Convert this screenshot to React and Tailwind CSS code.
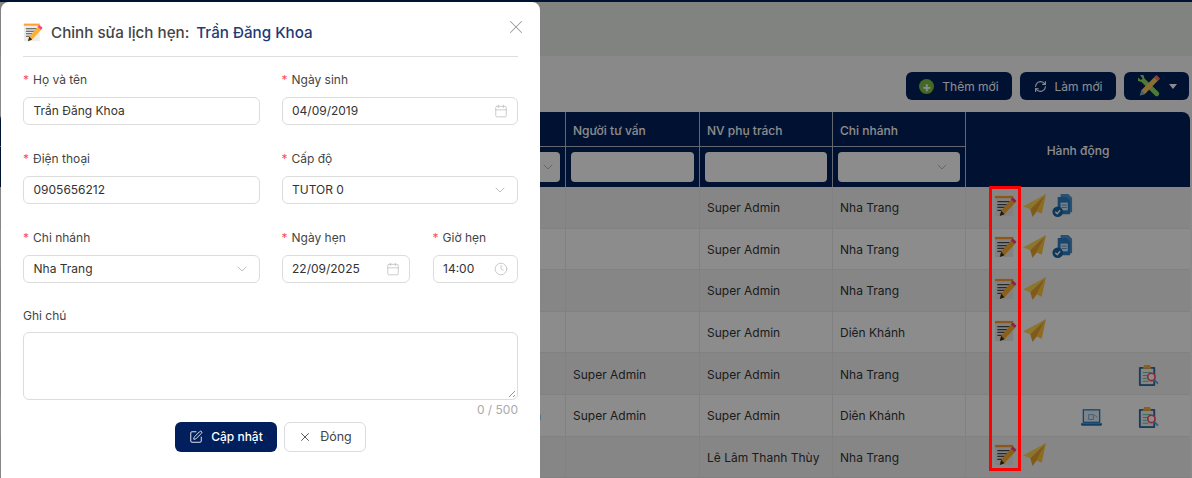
import React from "react";
import { ChevronDown, RefreshCw, X, Calendar, Clock, SquarePen } from "lucide-react";

const rows = [
  { advisor: "", staff: "Super Admin", branch: "Nha Trang", actions: ["edit", "plane", "doc"] },
  { advisor: "", staff: "Super Admin", branch: "Nha Trang", actions: ["edit", "plane", "doc"] },
  { advisor: "", staff: "Super Admin", branch: "Nha Trang", actions: ["edit", "plane"] },
  { advisor: "", staff: "Super Admin", branch: "Diên Khánh", actions: ["edit", "plane"] },
  { advisor: "Super Admin", staff: "Super Admin", branch: "Nha Trang", actions: [null, null, null, null, null, "clip"] },
  { advisor: "Super Admin", staff: "Super Admin", branch: "Diên Khánh", actions: [null, null, null, "laptop", null, "clip"], cut: "n" },
  { advisor: "", staff: "Lê Lâm Thanh Thùy", branch: "Nha Trang", actions: ["edit", "plane"] },
];

const EditIcon = ({ className }) => (
  <svg viewBox="0 0 24 24" className={className}>
    <rect x="1" y="2" width="19" height="21" fill="#ececec" />
    <rect x="1" y="2" width="19" height="2.400" fill="#ff9f2e" />
    <path d="M3.500 8h13M3.500 11h11M3.500 14h8M3.500 17h6" stroke="#4a4a4a" strokeWidth="1.300" />
    <path d="M19 4.500l4 3.500L11 21l-5 2 1.500-5.500z" fill="#ffb02e" />
    <path d="M19.500 3.500l4 3.500-2 2.200-4-3.500z" fill="#ff3f7f" />
    <path d="M7.500 17.500L6 23l5-2z" fill="#2e2e2e" />
  </svg>
);

const PlaneIcon = ({ className }) => (
  <svg viewBox="0 0 24 24" className={className}>
    <path d="M24 0L0 13l7.500 3z" fill="#ffd652" />
    <path d="M24 0L7.500 16 10 24l4.500-6z" fill="#e9a52f" />
    <path d="M24 0L14 18l5.500 2.500z" fill="#ffc53a" />
  </svg>
);

const DocIcon = ({ className }) => (
  <svg viewBox="0 0 24 24" className={className}>
    <path d="M10 0h8l4 4v15H10z" fill="#4a94d4" />
    <path d="M7 3h9l4 4v14H7z" fill="#2f7fc4" />
    <rect x="10" y="9" width="7.500" height="8" fill="#dcecf8" />
    <path d="M11 11.500h5.500M11 14h5.500" stroke="#4a94d4" strokeWidth="1" />
    <circle cx="7" cy="18.500" r="5.500" fill="#1a65a3" />
    <path d="M4.500 18.500l2 2 3-3.500" stroke="#fff" strokeWidth="1.400" fill="none" />
  </svg>
);

const ClipIcon = ({ className }) => (
  <svg viewBox="0 0 24 24" className={className}>
    <rect x="2" y="3" width="17" height="20" rx="1" fill="#2f6ea5" />
    <rect x="4" y="5" width="13" height="16" fill="#f2f2f2" />
    <path d="M7.500 1h6l1.500 4H6z" fill="#ffae35" />
    <path d="M6 9h9M6 12h5M6 15h4M6 18h6" stroke="#5cc29b" strokeWidth="1" />
    <circle cx="15" cy="13.500" r="3.800" fill="#fff" stroke="#ff4a6b" strokeWidth="1.700" />
    <path d="M18 16.500l4 4" stroke="#5aa5e6" strokeWidth="1.800" />
  </svg>
);

const LaptopIcon = ({ className }) => (
  <svg viewBox="0 0 24 24" className={className}>
    <rect x="3.500" y="4" width="17" height="13" fill="#e4f0fa" stroke="#2a80c4" strokeWidth="1.400" />
    <path d="M9 14V9h5v5zM15 9l3 3" stroke="#7aa8d0" strokeWidth="1" fill="none" />
    <path d="M1 18h22v1.500l-1 1H2l-1-1z" fill="#1f74b8" />
  </svg>
);

const ToolsIcon = ({ className }) => (
  <svg viewBox="0 0 24 24" className={className}>
    <path d="M3 1l3.500 0 1 3.500L21.500 18a2.400 2.400 0 01-3.500 3.500L4.500 8 1 7V3.500l3 2.500 1.500-1.500z" fill="#8fdc63" />
    <path d="M19 1.500l3.500 3.500L8 20l-5 1.500L4.500 16z" fill="#ffc85a" />
    <path d="M19.500 1l3.500 3.500-2.500 2.500L17 3.500z" fill="#ff7060" />
    <path d="M4.500 16L8 20l-5 1.500z" fill="#63b8e8" />
  </svg>
);

const icons = { edit: EditIcon, plane: PlaneIcon, doc: DocIcon, clip: ClipIcon, laptop: LaptopIcon };

const Label = ({ children, required = true }) => (
  <div className="h-[18px] leading-[18px] pt-[1px] text-[12px] text-[#444] mb-[9px]">
    {required && <span className="text-[#ff4d4f] mr-1">*</span>}
    {children}
  </div>
);

const Field = ({ children }) => (
  <div className="h-7 border border-[#dcdcdc] rounded-md bg-white flex items-center justify-between pl-[9.500px] pr-[9px] text-[12px] text-[#333]">
    <span className="contents">{children}</span>
  </div>
);

const HeadCell = ({ title, select = false }) => (
  <div className="border-r border-white/70 flex flex-col">
    <div className="h-[35px] border-b border-white/70 flex items-center pl-[7px] pt-[3px]">{title}</div>
    <div className="flex-1 flex items-center px-[5px]">
      <div className="w-full h-[30px] bg-white rounded flex items-center justify-end pr-[10px]">
        {select && <ChevronDown size={16} strokeWidth={1.2} className="text-[#aaa]" />}
      </div>
    </div>
  </div>
);

const App = () => {
  return (
    <div className="relative w-[1192px] h-[478px] overflow-hidden bg-[#fafafa]" style={{ fontFamily: "Inter, 'Noto Sans', sans-serif" }}>
      {/* page behind the modal */}
      <div className="h-[2px] bg-[#001f5c]" />
      <div className="h-[54px] bg-[#eceeec]" />
      <div className="flex justify-end gap-2 pr-[3px] pt-[16px] h-[56px]">
        <button className="w-[106px] h-7 rounded-md bg-[#001f5c] flex items-center justify-center gap-2 pt-[1px] text-[12px] text-white">
          <span className="w-[15px] h-[15px] rounded-full bg-[#7ac143] flex items-center justify-center text-white text-[14px] font-bold leading-none">+</span>
          Thêm mới
        </button>
        <button className="w-[96px] h-7 rounded-md bg-[#001f5c] flex items-center justify-center gap-2 pt-[1px] text-[12px] text-white">
          <RefreshCw size={13} />
          Làm mới
        </button>
        <button className="w-[65px] h-7 rounded-md bg-[#001f5c] flex items-center justify-center gap-2 text-white">
          <ToolsIcon className="w-6 h-6" />
          <span className="w-0 h-0 border-x-[4px] border-x-transparent border-t-[5px] border-t-white" />
        </button>
      </div>
      <div className="mr-[2px] text-[12px]">
        <div className="grid grid-cols-[566px_134px_133px_133px_224px] h-[75px] bg-[#001f5c] rounded-t-lg text-white font-medium">
          <div className="border-r border-white/70 flex flex-col">
            <div className="h-[35px] border-b border-white/70" />
            <div className="flex-1 flex justify-end items-center pr-[5px]">
              <div className="w-[60px] h-[30px] bg-white rounded flex items-center justify-end pr-1">
                <ChevronDown size={16} strokeWidth={1.2} className="text-[#aaa]" />
              </div>
            </div>
          </div>
          <HeadCell title="Người tư vấn" />
          <HeadCell title="NV phụ trách" />
          <HeadCell title="Chi nhánh" select />
          <div className="flex items-center justify-center pt-[3px]">Hành động</div>
        </div>
        {rows.map((row, i) => (
          <div
            key={i}
            className={`grid grid-cols-[566px_134px_133px_133px_224px] h-[41.6px] border-b border-[#ececec] text-[#333] items-center ${i % 2 === 0 ? "bg-[#f5f5f5]" : "bg-white"}`}
          >
            <div className="h-full border-r border-[#ececec] flex items-center justify-end pt-[2px] pr-[24px] text-[#1f74b8]">{row.cut}</div>
            <div className="h-full border-r border-[#ececec] flex items-center pt-[2px] pl-[7px]">{row.advisor}</div>
            <div className="h-full border-r border-[#ececec] flex items-center pt-[2px] pl-[7px]">{row.staff}</div>
            <div className="h-full border-r border-[#ececec] flex items-center pt-[2px] pl-[7px]">{row.branch}</div>
            <div className={`flex pl-[28px] ${row.actions[0] ? "-mt-1" : "mt-1"}`}>
              {row.actions.map((a, j) => {
                const Icon = a && icons[a];
                return (
                  <div key={j} className="w-[28.6px]">
                    {Icon && <Icon className="w-[23px] h-[23px]" />}
                  </div>
                );
              })}
            </div>
          </div>
        ))}
      </div>

      {/* mask */}
      <div className="absolute inset-0 bg-black/45" />

      {/* annotation */}
      <div className="absolute left-[989px] top-[186px] w-[32px] h-[285px] border-[3px] border-[#ff0000]" />

      {/* modal */}
      <div className="absolute left-[1px] top-[2px] w-[539px] h-[520px] bg-white rounded-lg px-[22px]">
        <div className="h-[55px] border-b border-[#dedede] flex items-center pt-[9px] text-[15.2px] font-medium">
          <EditIcon className="w-[20px] h-[20px] mr-2 -mt-1" />
          <span className="text-[#444]">Chỉnh sửa lịch hẹn:</span>
          <span className="text-[#1f3a78] ml-[7px]">Trần Đăng Khoa</span>
        </div>
        <X size={22} strokeWidth={1.1} className="absolute right-[13px] top-[14px] text-[#999]" />

        <div className="grid grid-cols-2 gap-x-[22px] gap-y-[24px] pt-[13px]">
          <div>
            <Label>Họ và tên</Label>
            <Field>Trần Đăng Khoa</Field>
          </div>
          <div>
            <Label>Ngày sinh</Label>
            <Field>04/09/2019<Calendar size={14} strokeWidth={1.3} className="text-[#bbb]" /></Field>
          </div>
          <div>
            <Label>Điện thoại</Label>
            <Field>0905656212</Field>
          </div>
          <div>
            <Label>Cấp độ</Label>
            <Field>TUTOR 0<ChevronDown size={16} strokeWidth={1.1} className="text-[#aaa]" /></Field>
          </div>
          <div>
            <Label>Chi nhánh</Label>
            <Field>Nha Trang<ChevronDown size={16} strokeWidth={1.1} className="text-[#aaa]" /></Field>
          </div>
          <div className="grid grid-cols-[128px_85px] gap-x-[23px]">
            <div>
              <Label>Ngày hẹn</Label>
              <Field>22/09/2025<Calendar size={14} strokeWidth={1.3} className="text-[#bbb]" /></Field>
            </div>
            <div>
              <Label>Giờ hẹn</Label>
              <Field>14:00<Clock size={14} strokeWidth={1.3} className="text-[#bbb]" /></Field>
            </div>
          </div>
        </div>

        <div className="mt-[23px]">
          <Label required={false}>Ghi chú</Label>
          <div className="relative h-[68px] border border-[#dcdcdc] rounded-md -mt-[1px]">
            <svg viewBox="0 0 8 8" className="absolute right-[1px] bottom-[1px] w-2 h-2">
              <path d="M1 7l6-6M5 7l2-2" stroke="#777" strokeWidth="0.8" />
            </svg>
          </div>
          <div className="text-right text-[12px] text-[#aaa] leading-[20px]">0 / 500</div>
        </div>

        <div className="flex justify-center gap-[7px] mt-[2px]">
          <button className="w-[102px] h-[30px] rounded-md bg-[#001f5c] text-white text-[12px] font-medium flex items-center justify-center gap-2">
            <SquarePen size={14} strokeWidth={1.5} />
            Cập nhật
          </button>
          <button className="w-[82px] h-[30px] rounded-md border border-[#dcdcdc] bg-white text-[#444] text-[12.5px] flex items-center justify-center gap-2">
            <X size={14} strokeWidth={1.5} />
            Đóng
          </button>
        </div>
      </div>
    </div>
  );
};

export default App;
